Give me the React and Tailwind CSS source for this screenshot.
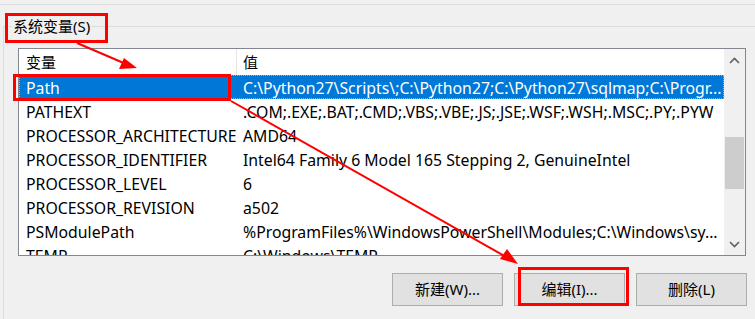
import React from 'react';

const rows = [
  ['Path', 'C:\\Python27\\Scripts\\;C:\\Python27;C:\\Python27\\sqlmap;C:\\Progr...'],
  ['PATHEXT', '.COM;.EXE;.BAT;.CMD;.VBS;.VBE;.JS;.JSE;.WSF;.WSH;.MSC;.PY;.PYW'],
  ['PROCESSOR_ARCHITECTURE', 'AMD64'],
  ['PROCESSOR_IDENTIFIER', 'Intel64 Family 6 Model 165 Stepping 2, GenuineIntel'],
  ['PROCESSOR_LEVEL', '6'],
  ['PROCESSOR_REVISION', 'a502'],
  ['PSModulePath', '%ProgramFiles%\\WindowsPowerShell\\Modules;C:\\Windows\\sy...'],
  ['TEMP', 'C:\\Windows\\TEMP'],
];

function Chevron({ up }) {
  return (
    <svg width="11" height="7" viewBox="0 0 11 7" className="block">
      <polyline
        points={up ? '1,6 5.5,1.5 10,6' : '1,1 5.5,5.5 10,1'}
        fill="none"
        stroke="#606060"
        strokeWidth="1.6"
      />
    </svg>
  );
}

export default function App() {
  return (
    <div className="relative w-[755px] h-[319px] overflow-hidden bg-[#f0f0f0] text-[15px] text-black font-['Noto_Sans','Noto_Sans_CJK_SC',sans-serif]">
      <div className="h-[5px] border-b border-[#dcdcdc]" />

      {/* group box */}
      <div className="mt-[21px] ml-[3px] h-[320px] border-l border-t border-[#dcdcdc]">
        <div className="-mt-[11px] ml-[8px] w-fit bg-[#f0f0f0] px-[1px] leading-[20px]">
          系统变量(S)
        </div>

        {/* list view */}
        <div className="mt-[12px] ml-[14px] flex w-[728px] h-[208px] border border-[#828790] bg-white overflow-hidden text-[15.8px]">
          <div className="flex-1 overflow-hidden">
            <div className="flex h-[26px] items-center">
              <div className="w-[218px] h-full flex items-center pl-[7px] border-r border-[#e5e5e5] text-[15px]">变量</div>
              <div className="pl-[6px] text-[15px]">值</div>
            </div>
            {rows.map(([name, value], i) => (
              <div
                key={name}
                className={`flex h-[24px] pt-[3px] items-center whitespace-nowrap ${i === 0 ? 'bg-[#0078d7] text-white outline-1 outline-dotted outline-[#f0a040] -outline-offset-1' : ''}`}
              >
                <div className="w-[219px] pl-[7px] overflow-hidden">{name}</div>
                <div className="flex-1 pl-[5px] overflow-hidden">{value}</div>
              </div>
            ))}
          </div>

          {/* scrollbar */}
          <div className="w-[21px] bg-[#f0f0f0] flex flex-col">
            <div className="h-[22px] flex items-center justify-center">
              <Chevron up />
            </div>
            <div className="mt-[66px] h-[52px] mx-[1px] bg-[#cdcdcd]" />
            <div className="flex-1" />
            <div className="h-[22px] flex items-center justify-center">
              <Chevron />
            </div>
          </div>
        </div>

        {/* buttons */}
        <div className="mt-[17px] ml-[388px] flex gap-[11px]">
          {['新建(W)...', '编辑(I)...', '删除(L)'].map(t => (
            <button
              key={t}
              className="w-[111px] h-[33px] border border-[#adadad] bg-[#e1e1e1] flex items-center justify-center"
            >
              {t}
            </button>
          ))}
        </div>
      </div>

      {/* annotations */}
      <svg className="absolute inset-0 pointer-events-none" width="755" height="319">
        <g fill="none" stroke="#ff0000" strokeWidth="3">
          <rect x="6.5" y="14.5" width="100" height="27" />
          <rect x="14.5" y="75.5" width="215" height="24" />
          <rect x="519.5" y="268.5" width="108" height="36" />
        </g>
        <g stroke="#ff0000" strokeWidth="2">
          <line x1="77" y1="43" x2="126" y2="64" />
          <line x1="231" y1="101" x2="508" y2="258" />
        </g>
        <g fill="#ff0000">
          <polygon points="137,68 119,69 124,58" />
          <polygon points="518,264 500,259 507,249" />
        </g>
      </svg>
    </div>
  );
}
